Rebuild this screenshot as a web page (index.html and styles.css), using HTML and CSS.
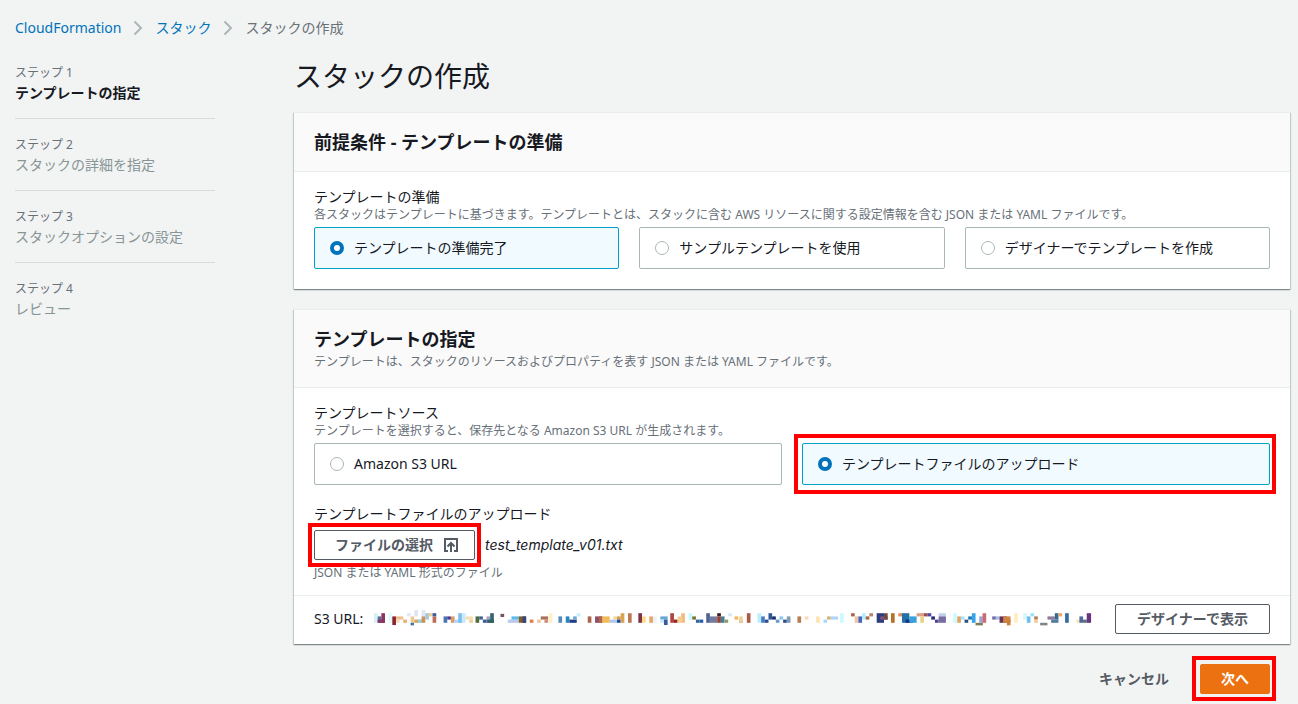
FILE: index.html
```html
<!DOCTYPE html>
<html lang="ja">
<head>
<meta charset="utf-8">
<meta name="viewport" content="width=device-width, initial-scale=1">
<title>スタックの作成 - CloudFormation</title>
<link rel="stylesheet" href="styles.css">
</head>
<body>
<nav class="breadcrumb" aria-label="パンくずリスト">
  <a href="#cloudformation">CloudFormation</a>
  <svg class="chevron" viewBox="0 0 10 16" aria-hidden="true"><path d="M1.5 1.5 8 8l-6.500 6.500"/></svg>
  <a href="#stacks">スタック</a>
  <svg class="chevron" viewBox="0 0 10 16" aria-hidden="true"><path d="M1.500 1.500 8 8l-6.500 6.500"/></svg>
  <span>スタックの作成</span>
</nav>
<div class="layout">
  <ol class="steps">
    <li class="step step-current" aria-current="step"><small>ステップ 1</small><span>テンプレートの指定</span></li>
    <li class="step"><small>ステップ 2</small><span>スタックの詳細を指定</span></li>
    <li class="step"><small>ステップ 3</small><span>スタックオプションの設定</span></li>
    <li class="step"><small>ステップ 4</small><span>レビュー</span></li>
  </ol>
  <main class="content">
    <h1>スタックの作成</h1>
    <section class="card">
      <header class="card-header"><h2>前提条件 - テンプレートの準備</h2></header>
      <div class="card-body">
        <fieldset>
          <legend>テンプレートの準備</legend>
          <p class="hint">各スタックはテンプレートに基づきます。テンプレートとは、スタックに含む AWS リソースに関する設定情報を含む JSON または YAML ファイルです。</p>
          <div class="tiles">
            <label class="tile"><input type="radio" name="prepare" checked>テンプレートの準備完了</label>
            <label class="tile"><input type="radio" name="prepare">サンプルテンプレートを使用</label>
            <label class="tile"><input type="radio" name="prepare">デザイナーでテンプレートを作成</label>
          </div>
        </fieldset>
      </div>
    </section>
    <section class="card">
      <header class="card-header card-header-tall">
        <h2>テンプレートの指定</h2>
        <p class="hint">テンプレートは、スタックのリソースおよびプロパティを表す JSON または YAML ファイルです。</p>
      </header>
      <div class="card-body source">
        <fieldset>
          <legend>テンプレートソース</legend>
          <p class="hint">テンプレートを選択すると、保存先となる Amazon S3 URL が生成されます。</p>
          <div class="tiles">
            <label class="tile"><input type="radio" name="source">Amazon S3 URL</label>
            <label class="tile marked"><input type="radio" name="source" checked>テンプレートファイルのアップロード</label>
          </div>
        </fieldset>
        <div class="upload">
          <div id="upload-label">テンプレートファイルのアップロード</div>
          <div class="file-row">
            <button class="button file-button marked" type="button" aria-describedby="upload-label">ファイルの選択
              <svg class="upload-icon" viewBox="0 0 16 16" aria-hidden="true"><path d="M5 14H2V2h12v12h-3M8 15V6M4.500 9.500 8 6l3.500 3.500"/></svg>
            </button>
            <em>test_template_v01.txt</em>
          </div>
          <p class="hint">JSON または YAML 形式のファイル</p>
        </div>
      </div>
      <footer class="card-footer">
        <span>S3 URL:</span>
        <svg id="masked-url" class="masked-url" viewBox="0 0 2156 50" preserveAspectRatio="none" role="img" aria-label="非表示の URL"></svg>
        <button class="button button-wide" type="button">デザイナーで表示</button>
      </footer>
    </section>
    <div class="actions">
      <button class="button button-link" type="button">キャンセル</button>
      <button class="button button-primary marked" type="button">次へ</button>
    </div>
  </main>
</div>
<script src="mosaic.js"></script>
</body>
</html>
```
FILE: styles.css
```css
* { box-sizing: border-box; }
body {
  margin: 0;
  padding: 18px 8px 8px 15px;
  background: #f2f3f3;
  color: #16191f;
  font: 14px/20px "Noto Sans", "Noto Sans CJK JP", sans-serif;
}
h1, h2, p, ol, fieldset { margin: 0; padding: 0; }
fieldset { border: 0; min-width: 0; }
legend { padding: 0; }
button, input { font: inherit; }
.breadcrumb { display: flex; align-items: center; gap: 12px; color: #687078; }
.breadcrumb a { color: #0073bb; text-decoration: none; }
.chevron { width: 10px; height: 16px; fill: none; stroke: #aab7b8; stroke-width: 2; }
.layout { display: grid; grid-template-columns: 200px minmax(0, 1fr); gap: 79px; margin-top: 20px; }
.steps { list-style: none; padding-top: 5px; }
.step { display: flex; flex-direction: column; padding-bottom: 15px; margin-bottom: 16px; border-bottom: 1px solid #d5dbdb; color: #879596; }
.step:last-child { border: 0; }
.step small { font-size: 12px; color: #687078; }
.step-current span { font-weight: 700; color: #16191f; }
h1 { font-size: 28px; line-height: 36px; font-weight: 400; margin-bottom: 18px; }
h2 { font-size: 18px; line-height: 22px; font-weight: 700; }
.card {
  margin-bottom: 20px;
  background: #fff;
  border-top: 1px solid #eaeded;
  box-shadow: 0 1px 1px 0 rgba(0, 28, 36, .3), 1px 1px 1px 0 rgba(0, 28, 36, .15), -1px 1px 1px 0 rgba(0, 28, 36, .15);
}
.card-header { padding: 18px 20px; background: #fafafa; border-bottom: 1px solid #eaeded; }
.card-header-tall { padding-bottom: 17px; }
.card-header-tall .hint { padding-top: 4px; }
.card-body { padding: 15px 20px 20px; }
.hint { font-size: 12px; line-height: 16px; color: #687078; }
.tiles { display: grid; grid-auto-flow: column; grid-auto-columns: minmax(0, 1fr); gap: 20px; margin-top: 4px; }
.tile { position: relative; display: flex; align-items: center; gap: 10px; min-height: 42px; padding: 0 15px; border: 1px solid #aab7b8; border-radius: 2px; }
.tile:has(input:checked) { background: #f1faff; border-color: #00a1c9; }
.tile input { appearance: none; flex: none; width: 14px; height: 14px; margin: 0; border: 1px solid #aab7b8; border-radius: 50%; background: #fff; }
.tile input:checked { border: 4px solid #0073bb; }
.source { padding-bottom: 14px; }
.upload { margin-top: 19px; }
.file-row { display: flex; align-items: center; gap: 10px; margin: 6px 0 5px; }
.file-row em { font-family: Inter, "Noto Sans", sans-serif; }
.button { position: relative; display: flex; align-items: center; justify-content: center; height: 30px; padding: 0 20px; border: 1px solid #545b64; border-radius: 2px; background: #fff; color: #545b64; font-weight: 700; white-space: nowrap; }
.button-wide { padding: 0 21px; }
.file-button { gap: 10px; padding-right: 15px; }
.upload-icon { width: 16px; height: 16px; fill: none; stroke: currentColor; stroke-width: 2; }
.card-footer { display: flex; align-items: center; padding: 8px 20px 10px; border-top: 1px solid #eaeded; }
.masked-url { flex: 1; min-width: 0; height: 16px; margin: 0 23px 2px 11px; }
.actions { display: flex; justify-content: flex-end; gap: 10px; padding-right: 20px; }
.button-link { background: none; border-color: transparent; }
.button-primary { background: #ec7211; border-color: #ec7211; color: #fff; }
.marked::after { content: ""; position: absolute; inset: -10px -7px -10px -9px; border: 4px solid #f00; pointer-events: none; }
.file-button::after { inset: -8px -7px; }
.button-primary::after { inset: -9px -7px -8px -9px; }
```
FILE: mosaic.js
```js
// Blocks of the masked URL: x, y, width, height, colour
const blocks = `
0 10 11 30 #d5f0fa;11 20 11 20 #5a6d91;22 10 11 30 #8b3564;11 30 22 10 #8b3564;44 10 11 30 #e0faff;55 20 11 27 #8f2430;66 20 22 10 #efc08a;66 30 11 10 #f6dcb8;88 30 11 10 #e6ad72;99 10 11 10 #dfe8f6;110 20 11 20 #efc995;110 40 10 8 #3b72bb;121 0 11 20 #e0e6f4;121 30 22 10 #d7a45d;132 30 11 10 #8fd4ec;143 0 11 20 #dde8f3;143 20 11 20 #c99157;154 10 11 20 #a4c7df;165 10 11 10 #f3cf8a;176 10 11 10 #385ba1;176 20 11 20 #bd6b5a
209 20 11 20 #4877b0;220 20 11 10 #50398b;231 20 11 20 #d99b6a;242 30 22 10 #a9d7ff;253 10 11 30 #79bfed;264 10 11 30 #c7eaff;275 20 22 10 #f8dfb3;286 30 11 10 #f4cd96
305 20 11 20 #506f38;316 20 11 10 #3d609a;327 30 22 10 #3c5999;338 20 11 20 #a6a4c8;349 10 11 30 #376375;340 30 20 10 #2d6267;380 12 11 10 #755265;402 30 33 10 #b9c8ee;413 20 22 10 #5abce9;435 20 22 20 #835c24;446 20 11 20 #344781;468 30 11 10 #d6804e;490 30 11 10 #f3c49a;501 20 22 10 #aa725c;512 30 11 10 #d58b76;525 10 11 30 #fff0c9
554 20 11 20 #508cb8;576 20 11 20 #2686c2;587 30 22 10 #203d82;598 20 11 10 #6ba6d4;609 10 11 10 #c2f2ff;642 20 11 20 #ad654a;664 20 22 20 #88526e;675 20 11 20 #b2664a;686 20 22 20 #f2bc58;708 30 22 10 #b1c7ee;719 20 11 10 #f2d98c;730 20 11 10 #d19b5a;730 30 11 10 #184ca0;741 10 11 30 #d9a34f;763 10 11 30 #bd7954
794 10 11 30 #7a3544;805 20 11 20 #ffd88b;827 20 11 20 #eda55d;838 20 11 20 #e9f3ff;860 20 22 10 #65a8d0;860 30 11 10 #c6e7ff;871 30 11 17 #365c9f;890 10 11 30 #ad4440;901 30 11 10 #9d2021;912 20 11 20 #f5ce8e;923 10 11 30 #f0be84;945 10 11 20 #c7faff;956 20 11 10 #79732f;967 30 11 10 #31669c;978 30 11 10 #265db0;998 10 11 30 #506493;1009 20 22 20 #747b9f;1031 10 11 10 #392022;1031 20 11 20 #9c422f;1042 20 11 20 #467e9a;1053 30 11 10 #8e9b6c;1064 10 11 10 #d7e9f8;1083 20 11 10 #f3b660;1097 30 11 10 #ad7d62
1097 20 11 20 #efd39c;1120 10 11 30 #a85b45;1152 10 11 30 #b6efff;1163 20 11 20 #4c7bc2;1174 30 11 10 #324c91;1185 10 11 20 #2e5999;1196 20 11 10 #162c66;1207 30 11 10 #6b9bce;1218 20 11 10 #87c7ed;1229 30 11 10 #26508d;1240 20 11 20 #809cae;1272 20 11 20 #b97c4c;1294 20 11 10 #ffd8b7;1328 20 11 20 #ffe4b0;1350 30 11 10 #a7d9ff;1361 20 11 10 #d7b36e;1372 20 22 10 #b3d5fc;1400 10 11 30 #c8faff
1433 10 11 10 #a86650;1444 20 11 20 #efc5a1;1455 20 11 20 #4667ba;1466 10 11 20 #b7ebff;1477 20 11 10 #a06b43;1488 10 11 10 #b2866e;1510 10 22 30 #2d3e80;1521 20 22 10 #87567d;1532 10 11 20 #734a3f;1553 10 11 30 #b77125;1575 10 11 10 #d88b65;1586 10 22 30 #2471a8;1597 30 22 10 #1e2e86;1608 20 22 20 #38a2d9;1630 10 22 10 #dc9d82;1641 20 11 20 #ead287;1652 10 11 10 #984d45;1663 10 11 10 #4f49a3;1674 20 11 10 #222c76;1685 30 11 10 #574491;1696 10 22 10 #c4d0e9;1696 20 22 20 #766ea2
1740 10 11 30 #c9fbff;1752 20 11 20 #e4a365;1763 20 11 10 #a4e3ff;1774 30 11 10 #2b5185;1785 20 11 10 #1776b2;1796 10 11 30 #32a4e7;1807 40 22 8 #807b57;1818 20 11 20 #9ca6d5;1828 10 11 30 #c96d75;1857 20 11 10 #726eb0;1868 20 11 10 #aab9df;1879 20 22 20 #643457;1890 20 22 20 #d18543;1901 30 11 18 #ca8036;1923 10 11 30 #ffedbd;1950 10 11 20 #d3f7ff;1961 20 11 20 #72bcf2;1972 10 11 10 #9ddfff;1983 20 11 10 #ad7e54;1983 30 11 10 #f2cb99;2001 40 22 8 #7e858a;2023 20 22 10 #8e7997;2034 30 22 10 #547ba0;2045 10 11 20 #376a8f;2056 10 11 10 #f0a465;2076 10 11 30 #356d9c;2110 30 11 10 #ffe0b6;2119 20 11 20 #4c6a9c;2130 30 11 10 #59717b;2141 10 13 30 #67347f
`;
const svg = document.getElementById("masked-url");
for (const block of blocks.trim().split(/[;\n]/)) {
  const [x, y, width, height, fill] = block.split(" ");
  const rect = document.createElementNS("http://www.w3.org/2000/svg", "rect");
  for (const [name, value] of Object.entries({ x, y, width, height, fill })) rect.setAttribute(name, value);
  svg.append(rect);
}
```
